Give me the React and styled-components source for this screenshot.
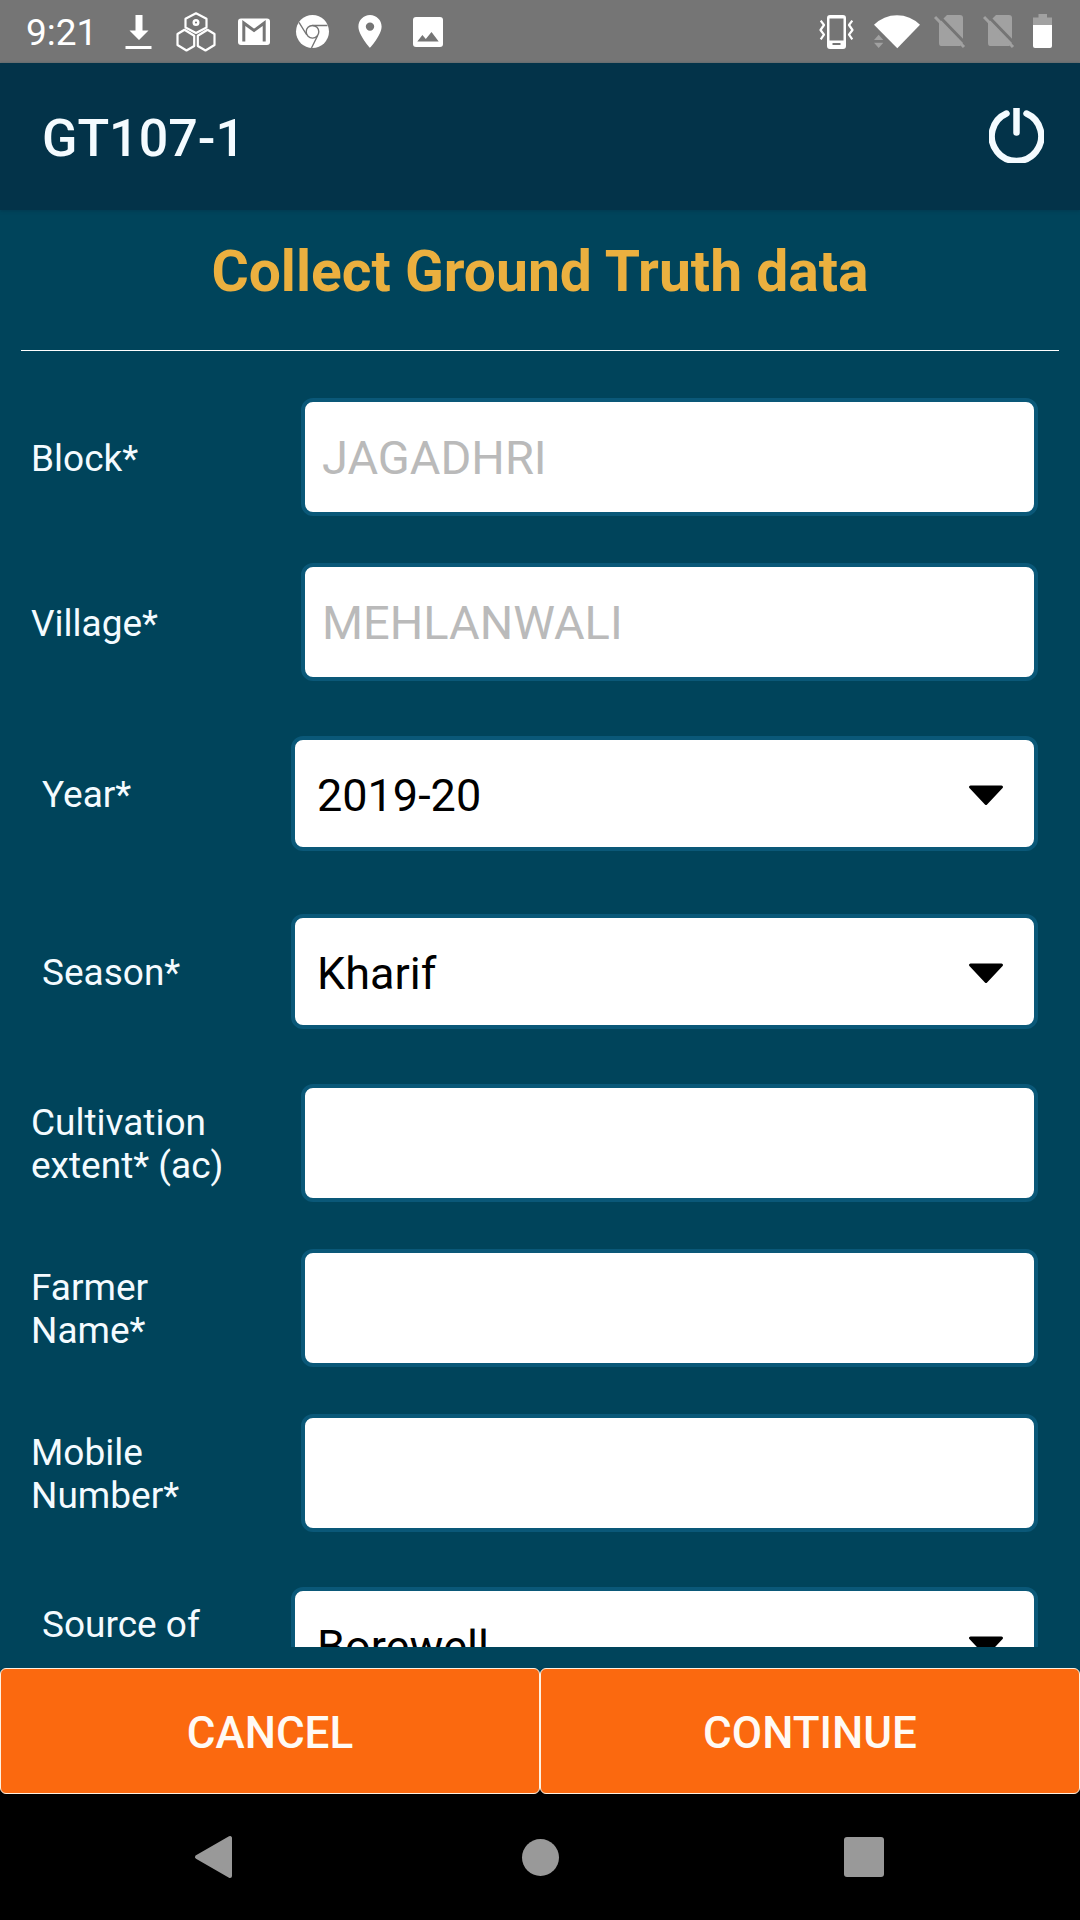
import { useState } from "react";
import styled, { createGlobalStyle } from "styled-components";

const textFields = {
  block: { label: "Block*", value: "JAGADHRI", disabled: true },
  village: { label: "Village*", value: "MEHLANWALI", disabled: true },
  extent: { label: "Cultivation extent* (ac)" },
  farmer: { label: "Farmer Name*" },
  mobile: { label: "Mobile Number*", type: "tel" },
};

const TextField = ({ name }) => {
  const field = textFields[name];
  const [value, setValue] = useState(field.value || "");
  return (
    <Row>
      <Label htmlFor={name}>{field.label}</Label>
      <Input
        id={name}
        type={field.type || "text"}
        value={value}
        disabled={field.disabled}
        onChange={(e) => setValue(e.target.value)}
      />
    </Row>
  );
};

const SelectField = ({ name, label, options, $lines }) => (
  <Row $select>
    <Label htmlFor={name} $lines={$lines}>
      {label}
    </Label>
    <SelectBox>
      <Select id={name} defaultValue={options[0]}>
        {options.map((option) => (
          <option key={option}>{option}</option>
        ))}
      </Select>
      <Arrow viewBox="0 0 36 22" aria-hidden="true">
        <path d="M2.500 2H33.500L18 18.500Z" fill="#000" stroke="#000" strokeWidth="3" strokeLinejoin="round" />
      </Arrow>
    </SelectBox>
  </Row>
);

const SimOff = () => (
  <StatusIcon $width={35} viewBox="0 0 35 40">
    <path d="M13 3H26Q29 3 29 6V31L26 34H7Q5 34 5 31V11Z" fill="#a1a1a1" />
    <path d="M3 2L33 33" stroke="#757575" strokeWidth="3" />
    <path d="M1 5L30 35" stroke="#a1a1a1" strokeWidth="3" />
  </StatusIcon>
);

const StatusBar = () => (
  <StyledStatus>
    <Clock>9:21</Clock>
    <Notifications>
      {/* download */}
      <StatusIcon viewBox="0 0 40 40">
        <path d="M17.5 3H24.5V18.5H30.5L21 28L11.5 18.5H17.5ZM7.5 34H33.5V37H7.5Z" fill="#fff" />
      </StatusIcon>
      {/* hexagons */}
      <StatusIcon viewBox="0 0 40 40">
        <g fill="none" stroke="#fff" strokeWidth="2.200" strokeLinejoin="round">
          <path d="M20 1.300L30.500 6.800V15.500L20 21L9.500 15.500V6.800Z" />
          <path d="M10.500 38.500L1.500 33V22L8.500 17.800L18.200 23.800V34Z" />
          <path d="M29.500 38.500L38.500 33V22L31.500 17.800L21.800 23.800V34Z" />
          <circle cx="20" cy="10.500" r="2.300" strokeWidth="2.400" />
        </g>
      </StatusIcon>
      {/* mail */}
      <StatusIcon viewBox="0 0 40 40">
        <rect x="4" y="6.500" width="32" height="26.500" rx="3" fill="#fff" />
        <path d="M9.800 29.500V11L20 18.500L30.200 11V29.500" fill="none" stroke="#757575" strokeWidth="3" />
      </StatusIcon>
      {/* browser */}
      <StatusIcon viewBox="0 0 40 40">
        <circle cx="20.500" cy="19.500" r="16.500" fill="#fff" />
        <g fill="none" stroke="#757575" strokeWidth="1.400">
          <circle cx="20.500" cy="19.800" r="6.300" />
          <path d="M20.500 13.500H35.500M7 10.300L14.800 23M25.800 23.300L19.500 36" />
        </g>
      </StatusIcon>
      {/* location */}
      <StatusIcon viewBox="0 0 40 40">
        <path
          d="M20 3C13.600 3 8.400 8.200 8.400 14.600C8.400 23.200 20 36 20 36S31.600 23.200 31.600 14.600C31.600 8.200 26.400 3 20 3ZM20 18.800A4.200 4.200 0 1 1 20 10.400A4.200 4.200 0 0 1 20 18.800Z"
          fill="#fff"
        />
      </StatusIcon>
      {/* picture */}
      <StatusIcon viewBox="0 0 40 40">
        <rect x="5" y="5" width="30" height="30" rx="3" fill="#fff" />
        <path d="M9.300 29.500L14.400 23L17.800 27L23.500 20L30.700 29.500Z" fill="#757575" />
      </StatusIcon>
    </Notifications>
    <System>
      {/* vibrate */}
      <StatusIcon $width={42} viewBox="0 0 42 40">
        <path
          d="M13 3H26Q29 3 29 6V34Q29 37 26 37H13Q10 37 10 34V6Q10 3 13 3ZM12.500 6.500V28.500H26.500V6.500ZM15.500 31V33H23.500V31Z"
          fill="#fff"
          fillRule="evenodd"
        />
        <path
          d="M3.700 8.700L7 13L3.500 18L7 22.700L3.700 27.300M35.300 8.700L32 13L35.500 18L32 22.700L35.300 27.300"
          fill="none"
          stroke="#fff"
          strokeWidth="2.200"
          strokeLinejoin="round"
        />
      </StatusIcon>
      {/* wifi */}
      <StatusIcon $width={47} viewBox="0 0 47 40">
        <path d="M1 12.700A32.500 32.500 0 0 1 47 12.700L24.300 36.300Z" fill="#fff" />
        <path d="M1 28L5.700 22.700L10.300 28ZM1 30.700H10.300L5.700 36Z" fill="#a1a1a1" />
      </StatusIcon>
      <SimOff />
      <SimOff />
      {/* battery */}
      <StatusIcon $width={20} viewBox="0 0 20 40">
        <path d="M6.500 2H15V5.500H20V13H1V5.500H6.500Z" fill="#a1a1a1" />
        <path d="M1 13H20V34Q20 36 18 36H3Q1 36 1 34Z" fill="#fff" />
      </StatusIcon>
    </System>
  </StyledStatus>
);

const App = () => {
  return (
    <Screen>
      <GlobalStyle />
      <StatusBar />
      <Header>
        <h1>GT107-1</h1>
        <PowerButton type="button" aria-label="Log out">
          <svg viewBox="0 0 55 55">
            <g fill="none" stroke="#f4fbff" strokeLinecap="round">
              <path d="M17.500 5.500A24.800 24.800 0 1 0 37.500 5.500" strokeWidth="6.500" />
              <path d="M27.500 0V24.500" strokeWidth="6.500" />
            </g>
          </svg>
        </PowerButton>
      </Header>
      <Title>Collect Ground Truth data</Title>
      <Form id="ground-truth">
        <TextField name="block" />
        <TextField name="village" />
        <SelectField name="year" label="Year*" options={["2019-20"]} />
        <SelectField name="season" label="Season*" options={["Kharif"]} />
        <TextField name="extent" />
        <TextField name="farmer" />
        <TextField name="mobile" />
        <SelectField name="source" label="Source of" options={["Borewell"]} $lines={2} />
      </Form>
      <Actions>
        <ActionButton type="button">CANCEL</ActionButton>
        <ActionButton type="button">CONTINUE</ActionButton>
      </Actions>
      <NavBar>
        <NavButton type="button" aria-label="Back">
          <svg viewBox="0 0 44 44">
            <path d="M3 22L36 3V41Z" fill="#999" stroke="#999" strokeWidth="4" strokeLinejoin="round" />
          </svg>
        </NavButton>
        <NavButton type="button" aria-label="Home">
          <svg viewBox="0 0 44 44">
            <circle cx="22.500" cy="22.500" r="18.500" fill="#999" />
          </svg>
        </NavButton>
        <NavButton type="button" aria-label="Recent apps">
          <svg viewBox="0 0 44 44">
            <rect x="2" y="2" width="40" height="40" rx="3" fill="#999" />
          </svg>
        </NavButton>
      </NavBar>
    </Screen>
  );
};

const GlobalStyle = createGlobalStyle`
  * {
    box-sizing: border-box;
    margin: 0;
    padding: 0;
  }
  body {
    background: #00445b;
    font-family: Roboto, "Liberation Sans", sans-serif;
  }
  button, input, select {
    font-family: inherit;
  }
`;

const Screen = styled.div`
  display: flex;
  flex-direction: column;
  height: 100vh;
  background: #00445b;
`;

const StyledStatus = styled.div`
  display: flex;
  align-items: flex-start;
  height: 63px;
  padding: 12px 28px 0 26px;
  background: #757575;
`;

const Clock = styled.span`
  width: 92px;
  color: #fff;
  font-size: 37px;
  line-height: 42px;
`;

const Notifications = styled.div`
  display: flex;
  gap: 18px;
`;

const System = styled.div`
  display: flex;
  gap: 14px;
  margin-left: auto;
`;

const StatusIcon = styled.svg`
  display: block;
  width: ${(props) => props.$width || 40}px;
  height: 40px;
`;

const Header = styled.header`
  display: flex;
  align-items: center;
  justify-content: space-between;
  height: 147px;
  padding: 0 36px 2px 42px;
  background: #033349;
  box-shadow: 0 1px 3px rgba(3, 51, 73, 0.6);
  h1 {
    padding-top: 6px;
    color: #f4fbff;
    font-size: 52px;
    font-weight: 500;
    line-height: 62px;
  }
`;

const PowerButton = styled.button`
  width: 55px;
  height: 55px;
  border: none;
  background: none;
  cursor: pointer;
  svg {
    display: block;
  }
`;

const Title = styled.h2`
  margin: 0 21px;
  padding: 28px 0 44px;
  border-bottom: 1px solid #fff;
  color: #ebb03f;
  font-size: 57px;
  font-weight: 700;
  line-height: 68px;
  text-align: center;
`;

const Form = styled.form`
  flex: 1;
  min-height: 0;
  padding-top: 23px;
  overflow-y: auto;
  scrollbar-width: none;
`;

const Row = styled.div`
  display: grid;
  grid-template-columns: 200px 1fr;
  align-items: center;
  column-gap: ${(props) => (props.$select ? "49px" : "70px")};
  padding: ${(props) =>
    props.$select ? "32px 42px 31px 42px" : "24px 42px 23px 31px"};
`;

const Label = styled.label`
  box-sizing: content-box;
  min-height: ${(props) => (props.$lines || 1) * 43}px;
  padding-top: 2px;
  color: #f4fbff;
  font-size: 37px;
  line-height: 43px;
`;

const Input = styled.input`
  width: 100%;
  height: 118px;
  padding: 0 17px;
  border: 4px solid #0a5878;
  border-radius: 12px;
  background: #fff;
  color: #000;
  font-size: 47px;
  &:disabled {
    color: #bababa;
  }
`;

const SelectBox = styled.div`
  position: relative;
`;

const Select = styled.select`
  display: block;
  width: 100%;
  height: 115px;
  padding: 3px 80px 0 22px;
  border: 4px solid #0a5878;
  border-radius: 12px;
  background: #fff;
  color: #000;
  font-size: 45px;
  appearance: none;
`;

const Arrow = styled.svg`
  position: absolute;
  top: 49px;
  right: 34px;
  width: 36px;
  height: 22px;
  pointer-events: none;
`;

const Actions = styled.div`
  display: flex;
  margin-top: 21px;
  background: linear-gradient(#00445b 50%, #000 50%);
`;

const ActionButton = styled.button`
  flex: 1;
  height: 126px;
  padding-top: 3px;
  border: 1px solid #fff1e0;
  border-radius: 6px;
  background: #fb690f;
  color: #fffaf4;
  font-size: 44px;
  font-weight: 500;
  cursor: pointer;
`;

const NavBar = styled.nav`
  display: flex;
  height: 126px;
  padding: 0 5%;
  background: #000;
`;

const NavButton = styled.button`
  display: flex;
  flex: 1;
  align-items: center;
  justify-content: center;
  border: none;
  background: none;
  cursor: pointer;
  svg {
    width: 44px;
    height: 44px;
  }
`;

export default App;
